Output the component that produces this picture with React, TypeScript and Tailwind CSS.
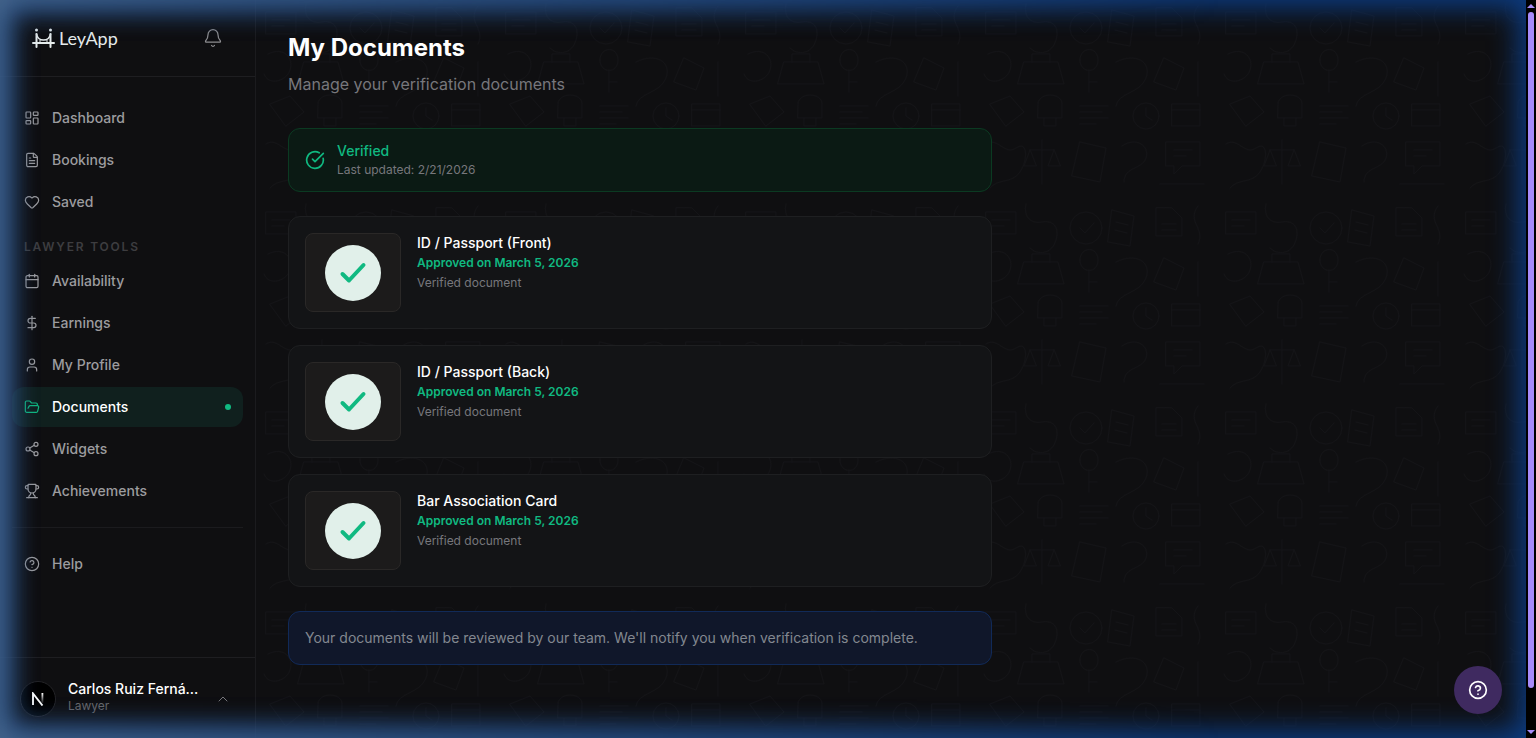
import React from 'react';
import {
    Bell,
    Calendar,
    ChevronUp,
    CircleCheckBig,
    CircleHelp,
    DollarSign,
    FileText,
    FolderOpen,
    Heart,
    LayoutDashboard,
    Share2,
    Trophy,
    User,
    type LucideIcon,
} from 'lucide-react';

interface NavItem {
    label: string;
    icon: LucideIcon;
    active?: boolean;
}

const MAIN_NAV: NavItem[] = [
    { label: 'Dashboard', icon: LayoutDashboard },
    { label: 'Bookings', icon: FileText },
    { label: 'Saved', icon: Heart },
];

const LAWYER_NAV: NavItem[] = [
    { label: 'Availability', icon: Calendar },
    { label: 'Earnings', icon: DollarSign },
    { label: 'My Profile', icon: User },
    { label: 'Documents', icon: FolderOpen, active: true },
    { label: 'Widgets', icon: Share2 },
    { label: 'Achievements', icon: Trophy },
];

const DOCUMENTS = [
    { title: 'ID / Passport (Front)', approved: 'March 5, 2026' },
    { title: 'ID / Passport (Back)', approved: 'March 5, 2026' },
    { title: 'Bar Association Card', approved: 'March 5, 2026' },
];

const Logo: React.FC = () => (
    <a href="#" className="flex items-center gap-1 text-[#e6ecec]">
        <svg width="23" height="20" viewBox="0 0 23 20" fill="none" stroke="currentColor" strokeLinecap="round">
            <circle cx="4.5" cy="2" r="1.5" fill="currentColor" stroke="none" />
            <circle cx="18.5" cy="2" r="1.5" fill="currentColor" stroke="none" />
            <path d="M4.5 6v13M18.5 6v13" strokeWidth="2" />
            <path d="M4.5 6c0.500 3.500 3.500 6 7 6s6.500-2.500 7-6" strokeWidth="1.700" />
            <path d="M1 15h21" strokeWidth="2" />
            <path d="M8 12v2M15 12v2" strokeWidth="1" />
        </svg>
        <span className="font-['Lato',sans-serif] text-lg leading-6">LeyApp</span>
    </a>
);

const NavLink: React.FC<{ item: NavItem }> = ({ item }) => {
    const Icon = item.icon;
    return (
        <li>
            <a
                href="#"
                className={
                    item.active
                        ? 'flex items-center gap-3 rounded-xl bg-[#10201e] px-3 py-2.5 text-white'
                        : 'flex items-center gap-3 rounded-xl px-3 py-2.5 text-[#9c9c9f] hover:text-white'
                }
            >
                <Icon size={16} strokeWidth={1.8} className={item.active ? 'text-[#10b981]' : ''} />
                <span className="flex-1 text-sm font-medium">{item.label}</span>
                {item.active && <span className="size-1.5 rounded-full bg-[#10b981]" />}
            </a>
        </li>
    );
};

const Sidebar: React.FC = () => (
    <aside className="flex w-64 shrink-0 flex-col border-r border-[#1b1b1e] bg-[#0f0f11]">
        <div className="flex h-[77px] items-center justify-between border-b border-[#1e1e21] px-8">
            <Logo />
            <button aria-label="Notifications" className="text-[#8d8d90]">
                <Bell size={20} strokeWidth={1.5} />
            </button>
        </div>

        <nav className="flex-1 px-3 pt-[21px]">
            <ul className="flex flex-col gap-0.5">
                {MAIN_NAV.map(item => <NavLink key={item.label} item={item} />)}
            </ul>
            <h2 className="mt-[17px] mb-1.5 px-3 text-xs font-semibold tracking-[0.15em] text-[#3d3d40] uppercase">
                Lawyer Tools
            </h2>
            <ul className="flex flex-col gap-0.5">
                {LAWYER_NAV.map(item => <NavLink key={item.label} item={item} />)}
            </ul>
            <ul className="mt-4 border-t border-[#1b1b1e] pt-4">
                <NavLink item={{ label: 'Help', icon: CircleHelp }} />
            </ul>
        </nav>

        <button className="flex items-center gap-3 border-t border-[#1e1e21] pt-[22px] pr-6 pb-5 pl-5 text-left">
            <span className="flex size-9 shrink-0 items-center justify-center rounded-full border border-[#242427] bg-black">
                <NextMark />
            </span>
            <span className="flex-1 pb-1 whitespace-nowrap">
                <span className="block text-sm leading-[18px] font-medium text-white">Carlos Ruiz Ferná...</span>
                <span className="block text-xs text-[#68686b]">Lawyer</span>
            </span>
            <ChevronUp size={16} strokeWidth={1.5} className="text-[#77777a]" />
        </button>
    </aside>
);

const NextMark: React.FC = () => (
    <svg width="14" height="14" viewBox="0 0 14 14" fill="none">
        <defs>
            <linearGradient id="markFade" x1="0" y1="0" x2="0" y2="1">
                <stop offset="0" stopColor="#fff" />
                <stop offset="1" stopColor="#fff" stopOpacity="0.1" />
            </linearGradient>
        </defs>
        <path d="M2 13V1.500L11.500 13.500" stroke="#fff" strokeWidth="1.900" />
        <rect x="10.500" y="1" width="1.800" height="10" fill="url(#markFade)" />
    </svg>
);

// Faint doodles behind the page content
const Doodles: React.FC = () => (
    <svg className="absolute inset-0 size-full" aria-hidden="true">
        <defs>
            <pattern id="doodles" width="240" height="200" patternUnits="userSpaceOnUse">
                <g fill="none" stroke="#141417" strokeWidth="1" strokeLinecap="round">
                    <path d="M10 12h30v22H10zM16 20h18M16 26h12M50 4c-3 14 6 20 16 18s18 4 14 18-18 16-26 8" />
                    <circle cx="110" cy="28" r="16" />
                    <path d="M104 28l5 5 9-10M136 10l22 6-4 30-22-4zM140 22l12 3M139 30l12 3" />
                    <path d="M180 8v28h26V18l-10-10zM186 24h14M186 30h14M222 6c-12 16 8 22 0 38M12 54c16-8 26 4 22 16S12 86 8 74" />
                    <path d="M48 62h34l6 22H42zM56 62v-8h18v8M104 60c0 14 18 14 18 0s-18-14-18 0M113 70v22M113 82h8" />
                    <path d="M140 62c20-10 36 0 30 16s-28 14-30 28M188 58l20 10-8 22-22-8zM222 62v34M14 104l20-8 14 16-18 14z" />
                    <path d="M62 104c0-12 24-12 24 0v14H62zM68 118v8h12v-8M104 106h28M104 112h22M104 118h28M104 124h16" />
                    <circle cx="170" cy="116" r="13" />
                    <path d="M170 108v8l6 4M196 104h28v22h-28zM196 110h28M10 144c12-8 18 12 30 4s12 12 4 24-22 6-30 16" />
                    <path d="M66 140v44M54 150h24M54 150l-6 16h12zM78 150l-6 16h12zM104 142l26 6-6 34-28-6zM146 146c14-10 28 0 24 12s-22 8-22 24" />
                    <path d="M190 142h34v24h-18l-8 8v-8h-8zM198 150h18M198 156h12M184 184h44" />
                </g>
            </pattern>
        </defs>
        <rect width="100%" height="100%" fill="url(#doodles)" />
    </svg>
);

const DocumentCard: React.FC<{ title: string; approved: string }> = ({ title, approved }) => (
    <article className="flex gap-4 rounded-xl border border-[#1e1f21] bg-[#131416] p-4">
        <div className="flex h-[79px] w-24 shrink-0 items-center justify-center rounded-lg border border-[#2a2827] bg-[#1c1b1b]">
            <div className="flex size-14 items-center justify-center rounded-full bg-[#e1f0ea]">
                <svg width="28" height="28" viewBox="0 0 28 28" fill="none">
                    <path d="M3.500 15l6.500 6.500L24.500 6" stroke="#10b981" strokeWidth="4" strokeLinecap="round" strokeLinejoin="round" />
                </svg>
            </div>
        </div>
        <div>
            <h3 className="text-sm font-medium text-white">{title}</h3>
            <p className="text-xs leading-5 font-semibold text-[#10b981]">Approved on {approved}</p>
            <p className="text-xs leading-5 text-[#77777c]">Verified document</p>
        </div>
    </article>
);

const Scrollbar: React.FC = () => (
    <div className="flex w-2.5 shrink-0 flex-col items-center gap-1 bg-black py-1" aria-hidden="true">
        <svg width="8" height="4" viewBox="0 0 8 4" fill="#a78bfa"><path d="M4 0l4 4H0z" /></svg>
        <div className="w-full flex-1 px-0.5 pb-[38px]">
            <div className="h-full rounded-full bg-[#a78bfa]" />
        </div>
        <svg width="8" height="4" viewBox="0 0 8 4" fill="#a78bfa"><path d="M0 0h8L4 4z" /></svg>
    </div>
);

const App: React.FC = () => (
    <div className="flex min-h-screen bg-[#0f0f11] font-['Inter',sans-serif]">
        <div className="relative flex min-w-0 flex-1">
            <Sidebar />
            <main className="relative min-w-0 flex-1 px-8 py-8">
                <Doodles />
                <div className="relative max-w-[704px]">
                    <h1 className="text-2xl font-bold text-white">My Documents</h1>
                    <p className="mt-2 text-base text-[#77777c]">Manage your verification documents</p>

                    <section className="mt-8 flex items-center gap-3 rounded-xl border border-[#0b3a22] bg-[#0b1a14] px-4 py-3">
                        <CircleCheckBig size={20} className="text-[#10b981]" />
                        <div>
                            <p className="text-sm font-medium text-[#10b981]">Verified</p>
                            <p className="text-xs leading-[18px] text-[#77777c]">Last updated: 2/21/2026</p>
                        </div>
                    </section>

                    <section className="mt-6 flex flex-col gap-4">
                        {DOCUMENTS.map(doc => <DocumentCard key={doc.title} {...doc} />)}
                    </section>

                    <p className="mt-6 rounded-xl border border-[#112a58] bg-[#10172a] p-4 text-sm text-[#838890]">
                        Your documents will be reviewed by our team. We'll notify you when verification is complete.
                    </p>
                </div>
            </main>

            {/* Edge glow, paler towards the left */}
            <div className="pointer-events-none absolute inset-0 shadow-[inset_0_0_28px_8px_#0c3c82]" />
            <div className="pointer-events-none absolute inset-0 mask-r-from-0% mask-r-to-80% shadow-[inset_0_0_28px_8px_#46658a]" />

            <button
                aria-label="Help"
                className="absolute right-6 bottom-6 flex size-12 items-center justify-center rounded-full bg-[#3f2a60] text-white"
            >
                <CircleHelp size={20} />
            </button>
        </div>
        <Scrollbar />
    </div>
);

export default App;
